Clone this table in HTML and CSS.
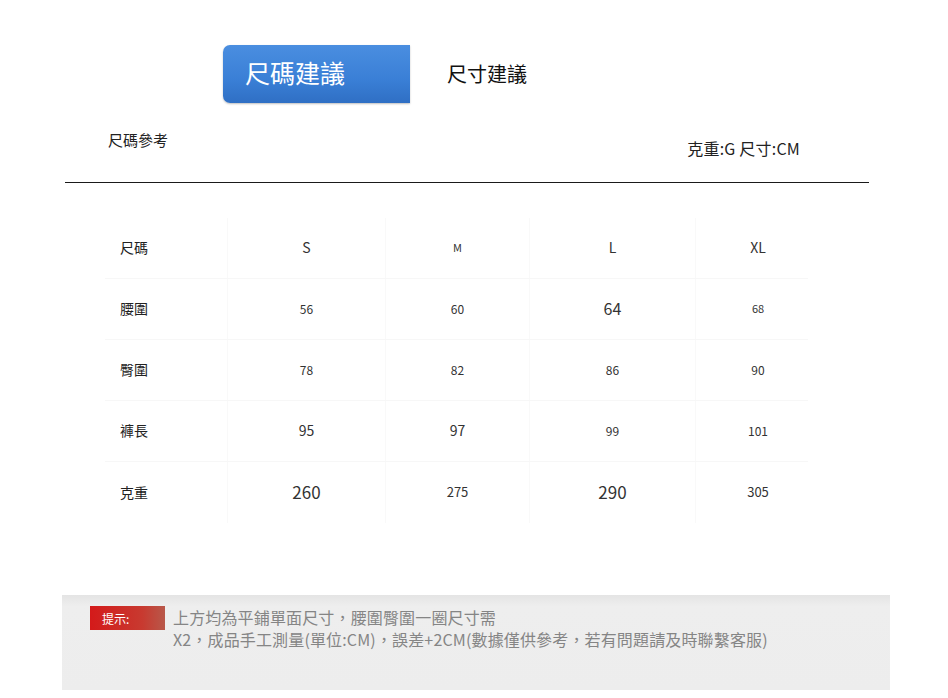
FILE: index.html
```html
<!DOCTYPE html>
<html lang="zh-Hant">
<head>
<meta charset="utf-8">
<link rel="stylesheet" href="styles.css">
</head>
<body>
<div class="page">
  <div class="tabs">
    <div class="tab-active">尺碼建議</div>
    <div class="tab-plain">尺寸建議</div>
  </div>
  <div class="head">
    <div class="head-left">尺碼參考</div>
    <div class="head-right">克重:G 尺寸:CM</div>
  </div>
  <div class="rule"></div>
  <div class="table">
    <div class="row">
      <div class="c lab">尺碼</div>
      <div class="c s14">S</div>
      <div class="c s11">M</div>
      <div class="c s14">L</div>
      <div class="c s14">XL</div>
    </div>
    <div class="row">
      <div class="c lab">腰圍</div>
      <div class="c s12">56</div>
      <div class="c s12">60</div>
      <div class="c s16">64</div>
      <div class="c s11">68</div>
    </div>
    <div class="row">
      <div class="c lab">臀圍</div>
      <div class="c s12">78</div>
      <div class="c s12">82</div>
      <div class="c s12">86</div>
      <div class="c s12">90</div>
    </div>
    <div class="row">
      <div class="c lab">褲長</div>
      <div class="c s14">95</div>
      <div class="c s14">97</div>
      <div class="c s12">99</div>
      <div class="c s12">101</div>
    </div>
    <div class="row">
      <div class="c lab">克重</div>
      <div class="c s17">260</div>
      <div class="c s13">275</div>
      <div class="c s17">290</div>
      <div class="c s13">305</div>
    </div>
  </div>
  <div class="tip">
    <div class="tip-label">提示:</div>
    <div class="tip-text">上方均為平鋪單面尺寸，腰圍臀圍一圈尺寸需<br>X2，成品手工測量(單位:CM)，誤差+2CM(數據僅供參考，若有問題請及時聯繫客服)</div>
  </div>
</div>
</body>
</html>
```
FILE: styles.css
```css
html, body {
  margin: 0;
  padding: 0;
  background: #ffffff;
}
body {
  font-family: "Noto Sans CJK TC", "Noto Sans", sans-serif;
  color: #222;
  width: 948px;
  height: 698px;
  overflow: hidden;
}
.page {
  display: flex;
  flex-direction: column;
}
.tabs {
  display: flex;
  align-items: center;
  margin-top: 45px;
  margin-left: 223px;
  height: 58px;
}
.tab-active {
  width: 187px;
  height: 58px;
  box-sizing: border-box;
  padding-left: 22px;
  display: flex;
  align-items: center;
  font-size: 25px;
  color: #fff;
  background: linear-gradient(180deg, #4a8ee0 0%, #3a7fd6 60%, #2f6fc4 100%);
  border-radius: 7px 0 0 7px;
  box-shadow: 0 1px 2px rgba(0,0,0,0.25);
  padding-bottom: 4px;
}
.tab-plain {
  margin-left: 37px;
  font-size: 20px;
  color: #111;
  padding-bottom: 2px;
}
.head {
  display: flex;
  justify-content: space-between;
  margin: 0 148px 0 108px;
  height: 79px;
}
.head-left {
  font-size: 15px;
  margin-top: 26px;
}
.head-right {
  font-size: 16px;
  margin-top: 33px;
  letter-spacing: 0.2px;
}
.rule {
  margin-left: 65px;
  width: 804px;
  height: 1px;
  background: #1a1a1a;
}
.table {
  margin-top: 35px;
  margin-left: 105px;
  align-self: flex-start;
  display: flex;
  flex-direction: column;
}
.row {
  display: grid;
  grid-template-columns: 123px 158px 144px 166px 112px;
  height: 61px;
  box-sizing: border-box;
  border-bottom: 1px solid #f7f7f7;
}
.row:last-child {
  border-bottom: none;
}
.c {
  display: flex;
  align-items: center;
  justify-content: center;
  color: #333;
  border-right: 1px solid #f9f9f9;
  padding-bottom: 2px;
}
.c:last-child {
  border-right: none;
  padding-left: 12px;
}
.lab {
  justify-content: flex-start;
  padding-left: 15px;
  font-size: 14px;
  color: #222;
}
.s11 { font-size: 11px; }
.s12 { font-size: 12px; }
.s13 { font-size: 13px; }
.s14 { font-size: 14px; }
.s16 { font-size: 16px; }
.s17 { font-size: 17px; }
.tip {
  margin-top: 72px;
  margin-left: 62px;
  width: 828px;
  height: 95px;
  background: linear-gradient(180deg, #e4e4e4 0%, #eeeeee 12%, #ededed 100%);
  display: flex;
  align-items: flex-start;
  box-sizing: border-box;
  padding-top: 11px;
  padding-left: 28px;
}
.tip-label {
  width: 75px;
  height: 24px;
  background: linear-gradient(90deg, #d41a1a 0%, #c83a30 70%, #b8584a 100%);
  color: #fff;
  font-size: 12px;
  display: flex;
  align-items: center;
  padding-left: 12px;
  box-sizing: border-box;
}
.tip-text {
  margin-left: 8px;
  font-size: 16px;
  line-height: 22px;
  color: #858585;
  margin-top: 0;
  letter-spacing: 0.15px;
}
```
